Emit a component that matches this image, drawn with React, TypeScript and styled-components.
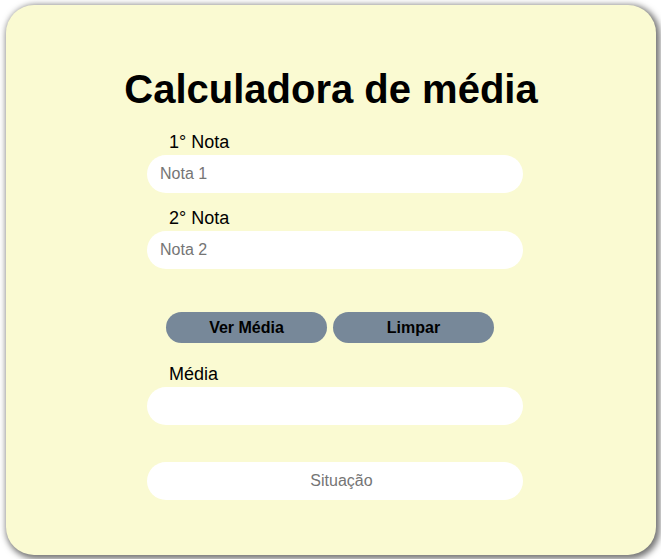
import styled, { createGlobalStyle } from "styled-components";

const GlobalStyle = createGlobalStyle`
  body {
    margin: 0;
    padding: 5px 5px 5px 6px;
    background: #ffffff;
    font-family: "Liberation Sans", Arial, sans-serif;
  }
`;

const Card = styled.main`
  width: 650px;
  height: 550px;
  box-sizing: border-box;
  background-color: #fafad2;
  border-radius: 28px;
  box-shadow: 2px 2px 6px 2px rgba(0, 0, 0, 0.55);
  display: flex;
  flex-direction: column;
  padding-top: 62px;
`;

const Title = styled.h1`
  margin: 0 0 20px;
  font-size: 40px;
  font-weight: bold;
  text-align: center;
  color: #000;
`;

const Form = styled.form`
  width: 376px;
  margin-left: 141px;
  display: flex;
  flex-direction: column;
`;

const Label = styled.label<{ $gap?: number }>`
  display: block;
  margin: ${({ $gap }) => $gap ?? 0}px 0 2px 22px;
  font-size: 18px;
  color: #000;
`;

const Field = styled.input<{ $center?: boolean; $gap?: number }>`
  box-sizing: border-box;
  width: 376px;
  height: 38px;
  margin-top: ${({ $gap }) => $gap ?? 0}px;
  padding: 0 0 0 13px;
  border: none;
  outline: none;
  border-radius: 19px;
  background: #ffffff;
  font-family: inherit;
  font-size: 16px;
  color: #000;
  text-align: ${({ $center }) => ($center ? "center" : "left")};
  &::placeholder {
    color: #757575;
  }
`;

const ButtonRow = styled.div`
  display: flex;
  gap: 6px;
  margin: 43px 0 0 19px;
`;

const Button = styled.button`
  width: 161px;
  height: 31px;
  border: none;
  border-radius: 16px;
  background-color: #778899;
  color: #000;
  font-family: inherit;
  font-size: 16px;
  font-weight: bold;
  cursor: pointer;
`;

export default function App() {
  return (
    <>
      <GlobalStyle />
      <Card>
        <Title>Calculadora de média</Title>
        <Form onSubmit={(e) => e.preventDefault()}>
          <Label htmlFor="nota1">1° Nota</Label>
          <Field id="nota1" type="number" placeholder="Nota 1" />
          <Label htmlFor="nota2" $gap={15}>2° Nota</Label>
          <Field id="nota2" type="number" placeholder="Nota 2" />
          <ButtonRow>
            <Button type="button">Ver Média</Button>
            <Button type="reset">Limpar</Button>
          </ButtonRow>
          <Label htmlFor="media" $gap={21}>Média</Label>
          <Field id="media" readOnly />
          <Field $center $gap={37} readOnly placeholder="Situação" />
        </Form>
      </Card>
    </>
  );
}
